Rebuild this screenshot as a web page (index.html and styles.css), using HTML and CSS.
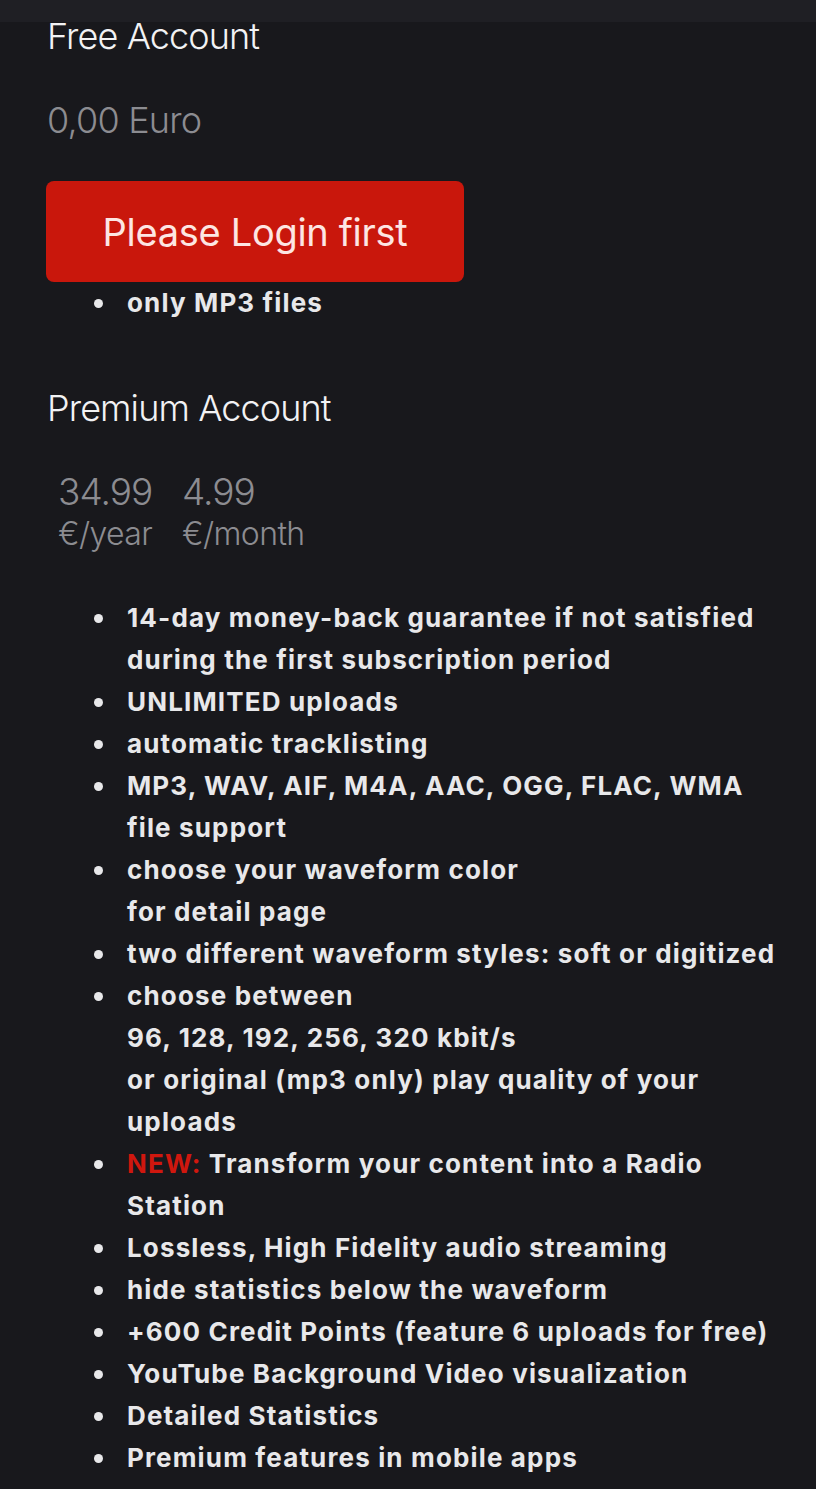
FILE: index.html
```html
<!DOCTYPE html>
<html lang="en">
<head>
<meta charset="utf-8">
<title>Accounts</title>
<link rel="stylesheet" href="styles.css">
</head>
<body>
<header class="topbar"></header>
<main class="page">
  <section class="plan">
    <h2 class="plan-title">Free Account</h2>
    <p class="price">0,00 Euro</p>
    <button class="login" type="button">Please Login first</button>
    <ul class="features">
      <li><span>only MP3 files</span></li>
    </ul>
  </section>
  <section class="plan premium">
    <h2 class="plan-title">Premium Account</h2>
    <div class="prices">
      <div class="price-col"><span class="amount">34.99</span><span class="unit">€/year</span></div>
      <div class="price-col"><span class="amount">4.99</span><span class="unit">€/month</span></div>
    </div>
    <ul class="features features-premium">
      <li><span>14-day money-back guarantee if not satisfied during the first subscription period</span></li>
      <li><span>UNLIMITED uploads</span></li>
      <li><span>automatic tracklisting</span></li>
      <li><span>MP3, WAV, AIF, M4A, AAC, OGG, FLAC, WMA file support</span></li>
      <li><span>choose your waveform color<br>for detail page</span></li>
      <li><span>two different waveform styles: soft or digitized</span></li>
      <li><span>choose between<br>96, 128, 192, 256, 320 kbit/s<br>or original (mp3 only) play quality of your uploads</span></li>
      <li><p class="item-text"><b class="new">NEW:</b> Transform your content into a Radio Station</p></li>
      <li><span>Lossless, High Fidelity audio streaming</span></li>
      <li><span>hide statistics below the waveform</span></li>
      <li><span>+600 Credit Points (feature 6 uploads for free)</span></li>
      <li><span>YouTube Background Video visualization</span></li>
      <li><span>Detailed Statistics</span></li>
      <li><span>Premium features in mobile apps</span></li>
    </ul>
  </section>
</main>
</body>
</html>
```
FILE: styles.css
```css
html, body {
  margin: 0;
  padding: 0;
  background: #18181c;
}
body {
  font-family: Inter, "Noto Sans", sans-serif;
  color: #f0f0f2;
}
.topbar {
  position: fixed;
  top: 0;
  left: 0;
  right: 0;
  height: 22px;
  background: #1f1f24;
  z-index: 2;
}
.page {
  padding: 14px 36px 0 47px;
}
.plan-title {
  margin: 0;
  font-family: Inter, sans-serif;
  font-weight: 300;
  font-size: 36px;
  line-height: 44px;
  letter-spacing: -0.9px;
  color: #f2f2f4;
}
.price {
  margin: 40px 0 0;
  font-weight: 300;
  font-size: 36px;
  line-height: 44px;
  letter-spacing: -0.8px;
  color: #8c8c91;
}
.login {
  display: block;
  margin: 39px 0 0 -1px;
  width: 418px;
  height: 101px;
  border: 0;
  border-radius: 8px;
  background: #c9170c;
  color: #fde6e3;
  font-family: Inter, sans-serif;
  font-weight: 400;
  font-size: 38px;
  letter-spacing: -0.3px;
  padding: 0;
}
.features {
  margin: 0;
  padding: 0 0 0 47px;
  list-style: none;
  font-family: Inter, "Liberation Sans", sans-serif;
  font-weight: 700;
  font-size: 26px;
  line-height: 42px;
  letter-spacing: 1.15px;
  color: #e8e8ea;
}
.features li {
  display: grid;
  grid-template-columns: 33px 1fr;
  align-items: start;
}
.features li::before {
  content: "";
  width: 9px;
  height: 9px;
  margin-top: 17px;
  border-radius: 50%;
  background: #e8e8ea;
}
.item-text {
  margin: 0;
}
.premium {
  margin-top: 62px;
}
.prices {
  display: grid;
  grid-template-columns: 124px auto;
  margin-top: 41px;
  padding-left: 11px;
  font-weight: 300;
  line-height: 42px;
  color: #8c8c91;
}
.price-col {
  display: flex;
  flex-direction: column;
}
.amount {
  font-size: 37px;
  letter-spacing: -1px;
}
.unit {
  font-size: 32px;
  letter-spacing: -0.6px;
}
.features-premium {
  margin-top: 42px;
}
.new {
  font-weight: 700;
  color: #d0170e;
}
```
